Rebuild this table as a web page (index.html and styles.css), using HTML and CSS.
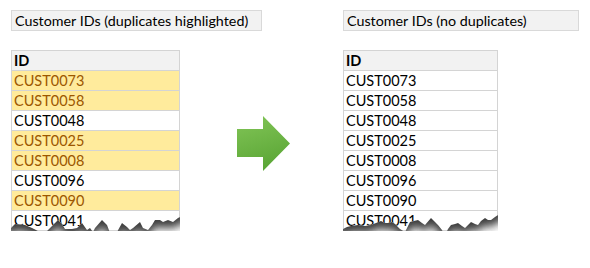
FILE: index.html
```html
<!DOCTYPE html>
<html>
<head>
<meta charset="utf-8">
<link rel="stylesheet" href="styles.css">
</head>
<body>
<div class="page">
  <section class="panel left">
    <div class="title">Customer IDs (duplicates highlighted)</div>
    <div class="sheet">
      <div class="row head">ID</div>
      <div class="row dup">CUST0073</div>
      <div class="row dup">CUST0058</div>
      <div class="row">CUST0048</div>
      <div class="row dup">CUST0025</div>
      <div class="row dup">CUST0008</div>
      <div class="row">CUST0096</div>
      <div class="row dup">CUST0090</div>
      <div class="row">CUST0041</div>
      <svg class="tear" width="169" height="45" viewBox="0 0 169 45">
        <defs>
          <filter id="blurL" x="-20%" y="-100%" width="140%" height="300%"><feGaussianBlur stdDeviation="4.5"/></filter>
          <clipPath id="belowL"><polygon points="0,18 4,14 14,15 21,18 27,21 32,25 37,20 44,13 47,10 51,14 54,19 61,19 66,18 71,13 76,20 79,18 82,22 84,18 91,10 96,15 101,28 106,22 111,13 116,17 119,20 122,18 129,12 132,18 137,20 141,15 144,10 149,10 152,12 157,10 162,12 167,8 169,7 169,45 0,45"/></clipPath>
        </defs>
        <polygon fill="#fff" points="0,18 4,14 14,15 21,18 27,21 32,25 37,20 44,13 47,10 51,14 54,19 61,19 66,18 71,13 76,20 79,18 82,22 84,18 91,10 96,15 101,28 106,22 111,13 116,17 119,20 122,18 129,12 132,18 137,20 141,15 144,10 149,10 152,12 157,10 162,12 167,8 169,7 169,45 0,45"/>
        <g clip-path="url(#belowL)">
          <polygon fill="#3a3a3a" filter="url(#blurL)" transform="translate(0,7)" points="0,18 4,14 14,15 21,18 27,21 32,25 37,20 44,13 47,10 51,14 54,19 61,19 66,18 71,13 76,20 79,18 82,22 84,18 91,10 96,15 101,28 106,22 111,13 116,17 119,20 122,18 129,12 132,18 137,20 141,15 144,10 149,10 152,12 157,10 162,12 167,8 169,7 175,7 175,-40 -6,-40 -6,18"/>
        </g>
      </svg>
    </div>
  </section>
  <div class="arrow">
    <svg width="53" height="55" viewBox="0 0 53 55">
      <defs>
        <linearGradient id="ag" x1="0" y1="0" x2="0.3" y2="1">
          <stop offset="0" stop-color="#82c557"/>
          <stop offset="1" stop-color="#5ca737"/>
        </linearGradient>
      </defs>
      <polygon fill="url(#ag)" points="0,13 26,13 26,0 53,27.5 26,55 26,41 0,41"/>
    </svg>
  </div>
  <section class="panel right">
    <div class="title">Customer IDs (no duplicates)</div>
    <div class="sheet">
      <div class="row head">ID</div>
      <div class="row">CUST0073</div>
      <div class="row">CUST0058</div>
      <div class="row">CUST0048</div>
      <div class="row">CUST0025</div>
      <div class="row">CUST0008</div>
      <div class="row">CUST0096</div>
      <div class="row">CUST0090</div>
      <div class="row">CUST0041</div>
      <svg class="tear" width="155" height="45" viewBox="0 0 155 45">
        <defs>
          <filter id="blurR" x="-20%" y="-100%" width="140%" height="300%"><feGaussianBlur stdDeviation="4.5"/></filter>
          <clipPath id="belowR"><polygon points="0,19 4,17 8,16 15,15 22,16 28,15 33,13 38,11 42,13 45,13 49,12 52,14 57,19 62,22 67,12 71,11 75,10 79,13 82,15 88,8 92,12 95,15 99,20 102,25 105,19 108,15 112,14 115,13 119,16 122,18 128,12 132,14 135,15 138,11 142,8 145,10 148,10 152,7 155,5 155,45 0,45"/></clipPath>
        </defs>
        <polygon fill="#fff" points="0,19 4,17 8,16 15,15 22,16 28,15 33,13 38,11 42,13 45,13 49,12 52,14 57,19 62,22 67,12 71,11 75,10 79,13 82,15 88,8 92,12 95,15 99,20 102,25 105,19 108,15 112,14 115,13 119,16 122,18 128,12 132,14 135,15 138,11 142,8 145,10 148,10 152,7 155,5 155,45 0,45"/>
        <g clip-path="url(#belowR)">
          <polygon fill="#3a3a3a" filter="url(#blurR)" transform="translate(0,7)" points="0,19 4,17 8,16 15,15 22,16 28,15 33,13 38,11 42,13 45,13 49,12 52,14 57,19 62,22 67,12 71,11 75,10 79,13 82,15 88,8 92,12 95,15 99,20 102,25 105,19 108,15 112,14 115,13 119,16 122,18 128,12 132,14 135,15 138,11 142,8 145,10 148,10 152,7 155,5 161,5 161,-40 -6,-40 -6,19"/>
        </g>
      </svg>
    </div>
  </section>
</div>
</body>
</html>
```
FILE: styles.css
```css
html, body {
  margin: 0;
  background: #fff;
}
body {
  font-family: "Lato", "Noto Sans", sans-serif;
  color: #000;
}
.page {
  display: flex;
  align-items: flex-start;
  padding: 10px 0 0 11px;
}
.panel {
  flex: none;
}
.left {
  width: 169px;
}
.right {
  width: 155px;
  margin-left: 53px;
}
.title {
  box-sizing: border-box;
  height: 21px;
  width: 251px;
  border: 1px solid #d9d9d9;
  background: #f2f2f2;
  font-size: 14.3px;
  line-height: 19px;
  padding-left: 3px;
  white-space: nowrap;
}
.right .title {
  width: 236px;
}
.sheet {
  position: relative;
  margin-top: 19px;
  border: 1px solid #d4d4d4;
  border-bottom: 0;
}
.row {
  box-sizing: border-box;
  height: 20px;
  border-bottom: 1px solid #d4d4d4;
  padding-left: 2px;
  font-size: 14.5px;
  line-height: 19px;
  white-space: nowrap;
}
.head {
  background: #f2f2f2;
  font-weight: bold;
}
.dup {
  background: #ffeb9c;
  color: #9c5700;
}
.tear {
  position: absolute;
  left: -1px;
  top: 159px;
  overflow: visible;
}
.arrow {
  flex: none;
  width: 53px;
  height: 55px;
  margin-left: 57px;
  margin-top: 106px;
}
.arrow svg {
  display: block;
}
```
